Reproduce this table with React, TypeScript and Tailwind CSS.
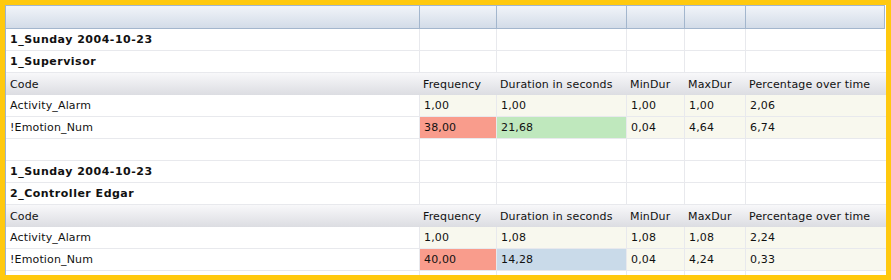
import React from 'react';

type Cell = { v: string; bg?: string };

const cols = ['w-[413px]', 'w-[77px]', 'w-[130px]', 'w-[58px]', 'w-[61px]', 'w-[141px]'];
const heads = ['Code', 'Frequency', 'Duration in seconds', 'MinDur', 'MaxDur', 'Percentage over time'];

const groups = [
  {
    day: '1_Sunday 2004-10-23',
    who: '1_Supervisor',
    rows: [
      [{ v: 'Activity_Alarm' }, { v: '1,00' }, { v: '1,00' }, { v: '1,00' }, { v: '1,00' }, { v: '2,06' }],
      [{ v: '!Emotion_Num' }, { v: '38,00', bg: 'bg-[#f99c8c]' }, { v: '21,68', bg: 'bg-[#bfe8bd]' }, { v: '0,04' }, { v: '4,64' }, { v: '6,74' }],
    ] as Cell[][],
  },
  {
    day: '1_Sunday 2004-10-23',
    who: '2_Controller Edgar',
    rows: [
      [{ v: 'Activity_Alarm' }, { v: '1,00' }, { v: '1,08' }, { v: '1,08' }, { v: '1,08' }, { v: '2,24' }],
      [{ v: '!Emotion_Num' }, { v: '40,00', bg: 'bg-[#f99c8c]' }, { v: '14,28', bg: 'bg-[#c9dae9]' }, { v: '0,04' }, { v: '4,24' }, { v: '0,33' }],
    ] as Cell[][],
  },
];

// group title rows and empty spacer rows
const Blank: React.FC<{ label?: string }> = ({ label }) => (
  <div className="flex h-[22px] border-b border-[#e8e9ed]">
    {cols.map((w, i) => (
      <div key={i} className={`${w} shrink-0 h-full px-1 pt-[2px] flex items-center ${i > 0 ? 'border-l border-[#e8e9ed]' : ''} font-bold tracking-[0.5px]`}>
        {i === 0 ? label : ''}
      </div>
    ))}
  </div>
);

const App: React.FC = () => {
  return (
    <div className="w-[891px] h-[280px] bg-[#ffc90e] p-[5px] overflow-hidden" style={{ fontFamily: '"DejaVu Sans", Tahoma, sans-serif' }}>
      <div className="w-[881px] h-[270px] bg-white border-l border-[#9fb3cb] overflow-hidden text-[11px] text-[#111] tracking-[0.15px]">
        <div className="flex h-[24px] border border-l-0 border-[#a3b6cd] bg-gradient-to-b from-[#f1f4f9] to-[#d3dce8] w-[879px]">
          {cols.map((w, i) => (
            <div key={i} className={`${w} shrink-0 h-full ${i > 0 ? 'border-l border-[#a3b6cd]' : ''} ${i === 0 ? 'w-[412px]' : ''}`} />
          ))}
        </div>
        {groups.map((g, gi) => (
          <div key={gi}>
            {gi > 0 && <Blank />}
            <Blank label={g.day} />
            <Blank label={g.who} />
            <div className="flex h-[22px] bg-gradient-to-b from-[#f8f8fa] to-[#dcdde2]">
              {heads.map((h, i) => (
                <div key={i} className={`${cols[i]} shrink-0 h-full px-1 pt-[2px] flex items-center`}>
                  {h}
                </div>
              ))}
            </div>
            {g.rows.map((r, ri) => (
              <div key={ri} className="flex h-[22px] border-b border-[#e8e9ed]">
                {r.map((c, i) => (
                  <div
                    key={i}
                    className={`${cols[i]} shrink-0 h-full px-1 pt-[2px] flex items-center ${i > 0 ? 'border-l border-[#e8e9ed]' : ''} ${c.bg ? c.bg : i > 0 ? 'bg-[#f8f8ee]' : 'bg-white'}`}
                  >
                    {c.v}
                  </div>
                ))}
              </div>
            ))}
          </div>
        ))}
        <Blank />
      </div>
    </div>
  );
};

export default App;
